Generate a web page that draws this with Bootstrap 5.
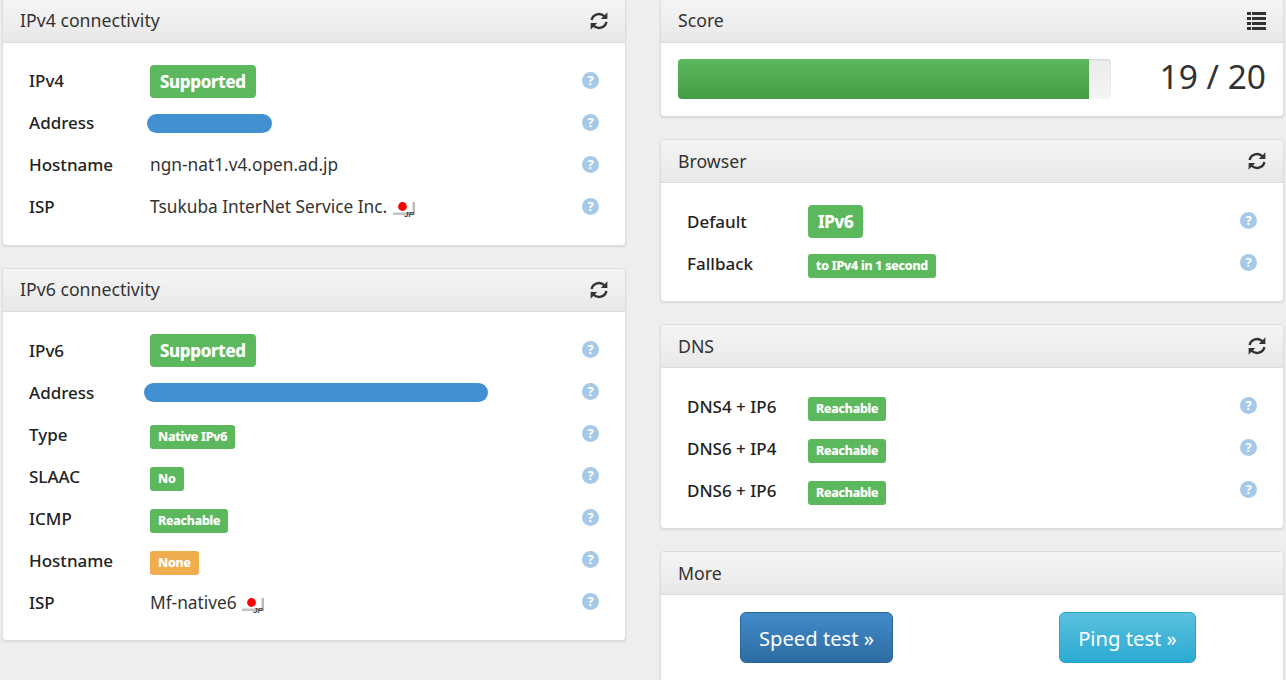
<!DOCTYPE html>
<html lang="en"><head><meta charset="utf-8"><title>IPv6 test</title>
<link rel="stylesheet" href="https://cdn.jsdelivr.net/npm/bootstrap@5.3.0/dist/css/bootstrap.min.css">
<style>
html,body{height:680px;overflow:hidden}
body{background:#eee;font-family:"Noto Sans",sans-serif;font-size:17.3px;color:#333}
.cols{gap:34px;padding:0 2px;margin-top:-1px}
.side{width:624px;flex:none}
.panel{border:1px solid #ddd;border-radius:4px;box-shadow:0 1px 2px rgba(0,0,0,.1);margin-bottom:22px;background:#fff;--bs-card-border-color:#ddd}
.panel-head{height:43px;padding:0 17px;background:linear-gradient(#f5f5f5,#e8e8e8);border-bottom:1px solid #ddd;font-size:17.7px;color:#333;border-radius:3px 3px 0 0}
.head-up>span{padding-bottom:2px}
.panel-main{padding:17px 26px 17px 26px}
.line{height:42px}
.key{width:121px;font-weight:500;font-size:17px;color:#222;flex:none}
.low .key{padding-top:2px}
.low .val{padding-top:2px}
.val{flex:1 1 auto;min-width:0}
.tag{background:#5cb85c;color:#fff;font-weight:700;border-radius:3px;display:inline-block;font-size:12.5px;line-height:16px;padding:4px 8px;text-shadow:0 0 1px rgba(255,255,255,.5);letter-spacing:-.22px}
.tag-lg{font-size:17px;line-height:25px;padding:4px 10px;letter-spacing:-.3px;border-radius:4px}
.low .tag-lg{margin-top:-2px}
.tag-warn{background:#f0ad4e}
.hide-bar{background:#428fd2;height:19px;border-radius:10px;display:block}
.bar-v4{width:125px;margin-left:-3px}
.bar-v6{width:344px;margin-left:-6px;margin-top:-2px}
.q{width:17px;height:17px;border-radius:50%;background:#a6c9e8;color:#fff;font:700 13px/17px "Noto Sans",sans-serif;text-align:center;margin-bottom:2px;flex:none}
.glyph{width:18px;height:18px;fill:#333;flex:none}
.glyph-list{width:19px}
.flag{width:24px;height:18px;vertical-align:-4px}
.meter{height:40px;width:433px;background:linear-gradient(#ebebeb,#f5f5f5);border-radius:4px;overflow:hidden;box-shadow:inset 0 1px 2px rgba(0,0,0,.1)}
.meter-fill{height:100%;background:linear-gradient(#5cb85c,#449d44)}
.score-body{padding:16px 17px 17px}
.score-num{font-size:33.5px;line-height:40px;color:#333;padding-bottom:3px;margin-top:-3px}
.go{font-size:20.2px;line-height:27px;padding:12px 18px 10px;border-radius:6px;color:#fff;border:1px solid}
.go-a{background:linear-gradient(#428bca,#2d6ca2);border-color:#2b669a}
.go-b{background:linear-gradient(#5bc0de,#2aabd2);border-color:#28a4c9}
.go:hover{color:#fff}
.more-body{padding:17px 0 24px}
</style></head><body>
<svg width="0" height="0" class="position-absolute"><defs>
<symbol id="re" viewBox="0 0 18 18"><path d="M1.6 8A7.5 7.5 0 0 1 14.5 4.5" fill="none" stroke="#333" stroke-width="2.4"/><polygon points="17.4,0.3 17.4,7 10.8,7" fill="#333"/><path d="M16.4 10A7.5 7.5 0 0 1 3.5 13.5" fill="none" stroke="#333" stroke-width="2.4"/><polygon points="0.6,17.7 0.6,11 7.2,11" fill="#333"/></symbol>
<symbol id="jp" viewBox="0 0 24 18"><rect x="1" y="13.5" width="21" height="2.5" fill="#c4c4c4"/><rect x="20.5" y="3" width="2.5" height="13" fill="#bbb"/><circle cx="10.5" cy="7.5" r="4.4" fill="#f00"/><text x="12" y="17.5" font-size="8" font-weight="700" font-style="italic" fill="#444" font-family="Liberation Sans,sans-serif">JP</text></symbol>
</defs></svg>
<div class="d-flex align-items-start cols">
<div class="side">
 <div class="card panel">
  <div class="panel-head head-up d-flex align-items-center justify-content-between"><span>IPv4 connectivity</span><svg class="glyph"><use href="#re"/></svg></div>
  <div class="panel-main">
   <div class="line d-flex align-items-center"><span class="key">IPv4</span><span class="val"><span class="tag tag-lg">Supported</span></span><span class="q">?</span></div>
   <div class="line d-flex align-items-center"><span class="key">Address</span><span class="val"><span class="hide-bar bar-v4"></span></span><span class="q">?</span></div>
   <div class="line d-flex align-items-center"><span class="key">Hostname</span><span class="val">ngn-nat1.v4.open.ad.jp</span><span class="q">?</span></div>
   <div class="line d-flex align-items-center"><span class="key">ISP</span><span class="val">Tsukuba InterNet Service Inc. <svg class="flag"><use href="#jp"/></svg></span><span class="q">?</span></div>
  </div>
 </div>
 <div class="card panel">
  <div class="panel-head head-up d-flex align-items-center justify-content-between"><span>IPv6 connectivity</span><svg class="glyph"><use href="#re"/></svg></div>
  <div class="panel-main low">
   <div class="line d-flex align-items-center"><span class="key">IPv6</span><span class="val"><span class="tag tag-lg">Supported</span></span><span class="q">?</span></div>
   <div class="line d-flex align-items-center"><span class="key">Address</span><span class="val"><span class="hide-bar bar-v6"></span></span><span class="q">?</span></div>
   <div class="line d-flex align-items-center"><span class="key">Type</span><span class="val"><span class="tag">Native IPv6</span></span><span class="q">?</span></div>
   <div class="line d-flex align-items-center"><span class="key">SLAAC</span><span class="val"><span class="tag">No</span></span><span class="q">?</span></div>
   <div class="line d-flex align-items-center"><span class="key">ICMP</span><span class="val"><span class="tag">Reachable</span></span><span class="q">?</span></div>
   <div class="line d-flex align-items-center"><span class="key">Hostname</span><span class="val"><span class="tag tag-warn">None</span></span><span class="q">?</span></div>
   <div class="line d-flex align-items-center"><span class="key">ISP</span><span class="val">Mf-native6 <svg class="flag"><use href="#jp"/></svg></span><span class="q">?</span></div>
  </div>
 </div>
</div>
<div class="side">
 <div class="card panel">
  <div class="panel-head head-up d-flex align-items-center justify-content-between"><span>Score</span><svg class="glyph glyph-list" viewBox="0 0 19 18"><rect x="0" y="0" width="4" height="3"/><rect x="5" y="0" width="14" height="3"/><rect x="0" y="5" width="4" height="3"/><rect x="5" y="5" width="14" height="3"/><rect x="0" y="10" width="4" height="3"/><rect x="5" y="10" width="14" height="3"/><rect x="0" y="15" width="4" height="3"/><rect x="5" y="15" width="14" height="3"/></svg></div>
  <div class="score-body d-flex align-items-center justify-content-between"><div class="meter"><div class="meter-fill" style="width:95%"></div></div><div class="score-num">19 / 20</div></div>
 </div>
 <div class="card panel">
  <div class="panel-head d-flex align-items-center justify-content-between"><span>Browser</span><svg class="glyph"><use href="#re"/></svg></div>
  <div class="panel-main low">
   <div class="line d-flex align-items-center"><span class="key">Default</span><span class="val"><span class="tag tag-lg">IPv6</span></span><span class="q">?</span></div>
   <div class="line d-flex align-items-center"><span class="key">Fallback</span><span class="val"><span class="tag">to IPv4 in 1 second</span></span><span class="q">?</span></div>
  </div>
 </div>
 <div class="card panel">
  <div class="panel-head d-flex align-items-center justify-content-between"><span>DNS</span><svg class="glyph"><use href="#re"/></svg></div>
  <div class="panel-main low">
   <div class="line d-flex align-items-center"><span class="key">DNS4 + IP6</span><span class="val"><span class="tag">Reachable</span></span><span class="q">?</span></div>
   <div class="line d-flex align-items-center"><span class="key">DNS6 + IP4</span><span class="val"><span class="tag">Reachable</span></span><span class="q">?</span></div>
   <div class="line d-flex align-items-center"><span class="key">DNS6 + IP6</span><span class="val"><span class="tag">Reachable</span></span><span class="q">?</span></div>
  </div>
 </div>
 <div class="card panel">
  <div class="panel-head d-flex align-items-center"><span>More</span></div>
  <div class="more-body row g-0 text-center"><div class="col-6"><a class="btn go go-a" href="#">Speed test »</a></div><div class="col-6"><a class="btn go go-b" href="#">Ping test »</a></div></div>
 </div>
</div>
</div>
</body></html>
